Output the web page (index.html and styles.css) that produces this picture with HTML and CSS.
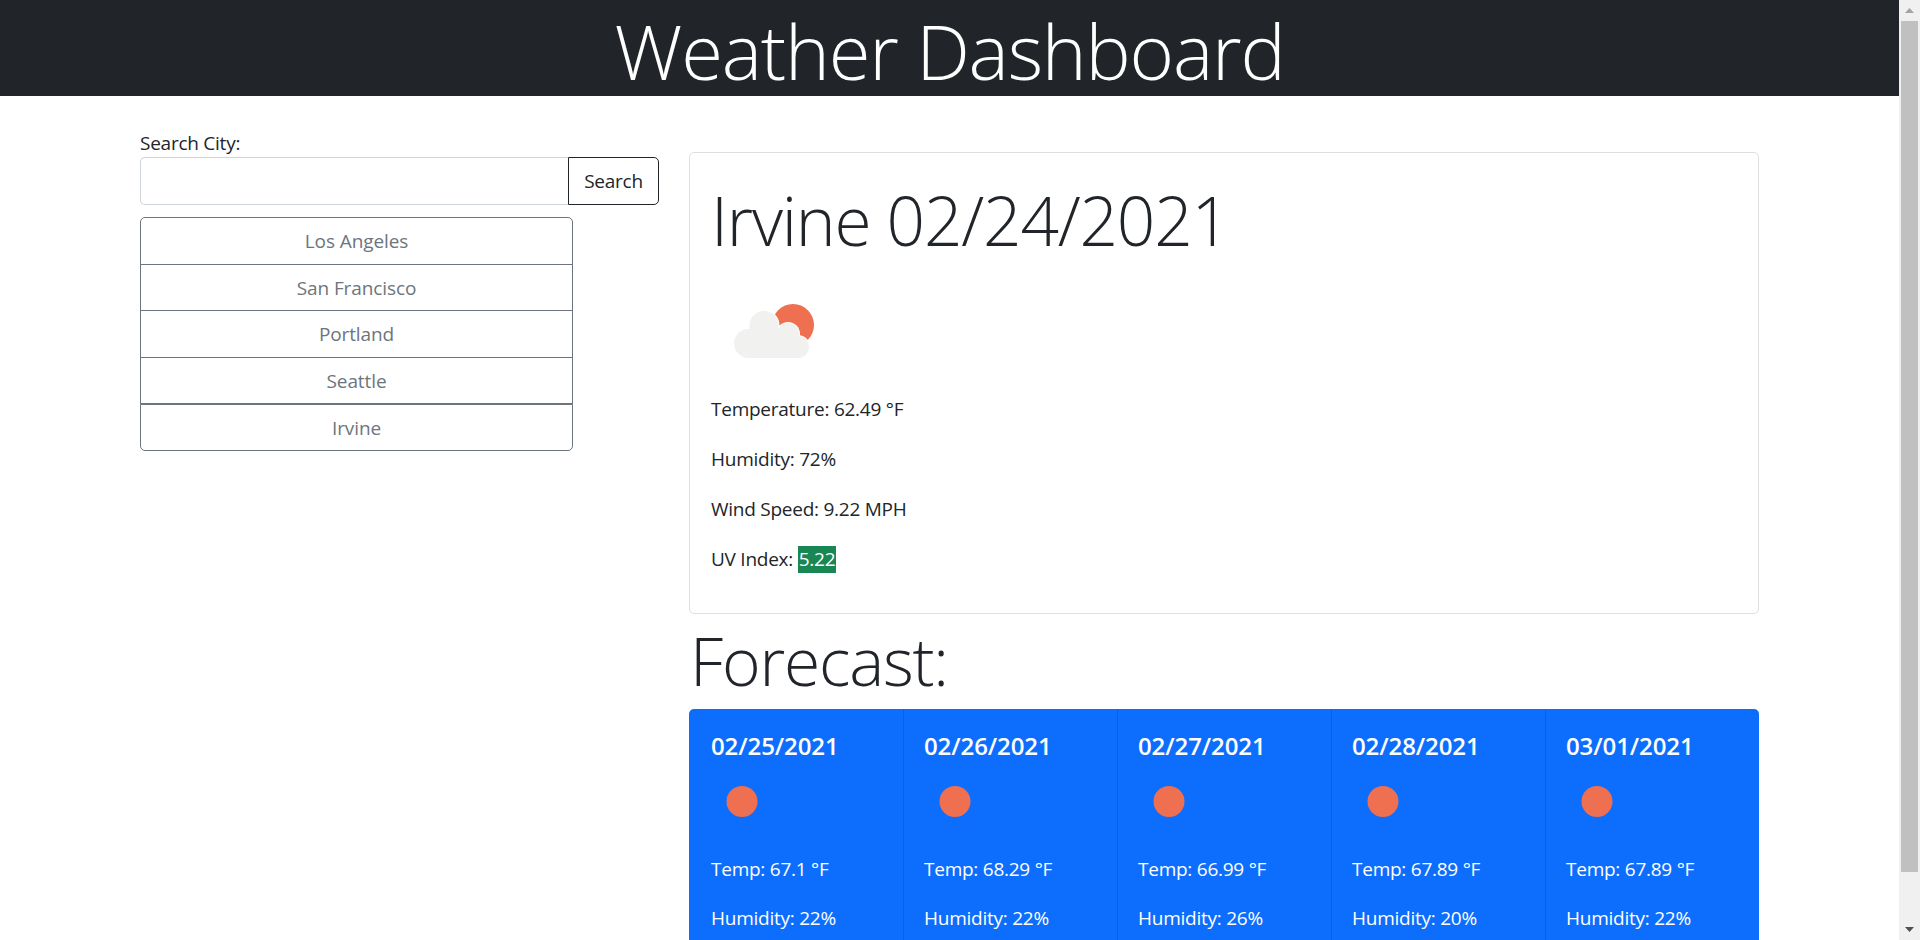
FILE: index.html
```html
<!DOCTYPE html>
<html lang="en">
<head>
    <meta charset="UTF-8">
    <meta name="viewport" content="width=device-width, initial-scale=1.0">
    <title>Weather Dashboard</title>
    <link rel="stylesheet" href="styles.css">
</head>
<body>
    <div class="page">
        <div class="viewport">
            <header class="title-bar">
                <h1>Weather Dashboard</h1>
            </header>
            <main class="layout">
                <section class="search-col">
                    <form class="search-form">
                        <label for="city">Search City:</label>
                        <div class="input-group">
                            <input type="text" id="city">
                            <button type="button" class="search-btn">Search</button>
                        </div>
                    </form>
                    <div class="city-list">
                        <button type="button" class="city">Los Angeles</button>
                        <button type="button" class="city">San Francisco</button>
                        <button type="button" class="city">Portland</button>
                        <button type="button" class="city">Seattle</button>
                        <button type="button" class="city">Irvine</button>
                    </div>
                </section>
                <section class="weather-col">
                    <div class="today-card">
                        <h2>Irvine 02/24/2021</h2>
                        <svg class="icon-large" viewBox="0 0 122 122">
                            <circle class="sun" cx="82" cy="55" r="21"/>
                            <g class="cloud-edge">
                                <circle cx="53" cy="55.5" r="15.5"/>
                                <circle cx="77" cy="64" r="12"/>
                                <circle cx="87" cy="77" r="12"/>
                            </g>
                            <g class="cloud">
                                <circle cx="53" cy="55.5" r="14.5"/>
                                <circle cx="77" cy="64" r="11"/>
                                <circle cx="87" cy="77" r="11"/>
                                <circle cx="37.5" cy="73.5" r="14.5"/>
                                <rect x="37" y="62" width="50" height="26"/>
                            </g>
                        </svg>
                        <p>Temperature: 62.49 °F</p>
                        <p>Humidity: 72%</p>
                        <p>Wind Speed: 9.22 MPH</p>
                        <p>UV Index: <span class="uv">5.22</span></p>
                    </div>
                    <h2 class="forecast-title">Forecast:</h2>
                    <div class="forecast">
                        <div class="day">
                            <h5>02/25/2021</h5>
                            <svg class="icon-small" viewBox="0 0 61 61"><circle class="sun" cx="31" cy="30.5" r="15.5"/></svg>
                            <p>Temp: 67.1 °F</p>
                            <p>Humidity: 22%</p>
                        </div>
                        <div class="day">
                            <h5>02/26/2021</h5>
                            <svg class="icon-small" viewBox="0 0 61 61"><circle class="sun" cx="31" cy="30.5" r="15.5"/></svg>
                            <p>Temp: 68.29 °F</p>
                            <p>Humidity: 22%</p>
                        </div>
                        <div class="day">
                            <h5>02/27/2021</h5>
                            <svg class="icon-small" viewBox="0 0 61 61"><circle class="sun" cx="31" cy="30.5" r="15.5"/></svg>
                            <p>Temp: 66.99 °F</p>
                            <p>Humidity: 26%</p>
                        </div>
                        <div class="day">
                            <h5>02/28/2021</h5>
                            <svg class="icon-small" viewBox="0 0 61 61"><circle class="sun" cx="31" cy="30.5" r="15.5"/></svg>
                            <p>Temp: 67.89 °F</p>
                            <p>Humidity: 20%</p>
                        </div>
                        <div class="day">
                            <h5>03/01/2021</h5>
                            <svg class="icon-small" viewBox="0 0 61 61"><circle class="sun" cx="31" cy="30.5" r="15.5"/></svg>
                            <p>Temp: 67.89 °F</p>
                            <p>Humidity: 22%</p>
                        </div>
                    </div>
                </section>
            </main>
        </div>
        <div class="scrollbar">
            <svg class="arrow" viewBox="0 0 9 5"><polygon class="arrow-up" points="4.5,0 9,5 0,5"/></svg>
            <div class="thumb"></div>
            <svg class="arrow" viewBox="0 0 9 5"><polygon class="arrow-down" points="0,0 9,0 4.5,5"/></svg>
        </div>
    </div>
</body>
</html>
```

FILE: styles.css
```css
* {
    box-sizing: border-box;
}

body {
    margin: 0;
    font-family: "Open Sans", "Noto Sans", sans-serif;
    font-size: 19px;
    letter-spacing: -0.25px;
    line-height: 1.5;
    color: #212529;
    background-color: white;
}

.page {
    display: flex;
    height: 100vh;
    overflow: hidden;
}

.viewport {
    flex: 1;
    overflow: hidden;
}

.title-bar {
    height: 96px;
    padding-top: 7px;
    background-color: #212529;
    color: white;
    text-align: center;
}

.title-bar h1 {
    margin: 0;
    font-size: 76px;
    font-weight: 300;
    line-height: 88px;
    letter-spacing: -1.2px;
}

.layout {
    display: grid;
    grid-template-columns: 519px 1070px;
    gap: 30px;
    padding-left: 140px;
}

/* left column */
.search-col {
    padding-top: 33px;
}

.search-form label {
    display: block;
    line-height: 28px;
}

.input-group {
    display: flex;
    height: 48px;
}

.input-group input {
    flex: 1;
    min-width: 0;
    border: 1px solid #ced4da;
    border-right: none;
    border-radius: 5px 0 0 5px;
}

.search-btn {
    width: 91px;
    padding-top: 1px;
    background: white;
    border: 1px solid #212529;
    border-radius: 0 5px 5px 0;
    color: #212529;
    font: inherit;
    letter-spacing: inherit;
}

.city-list {
    display: flex;
    flex-direction: column;
    width: 433px;
    margin-top: 12px;
}

.city {
    height: 47.5px;
    margin-top: -1px;
    padding-top: 2px;
    background: white;
    border: 1px solid #6c757d;
    color: #6c757d;
    font: inherit;
    letter-spacing: -0.1px;
}

.city:first-child {
    margin-top: 0;
    border-radius: 5px 5px 0 0;
}

.city:last-child {
    margin-top: 0;
    height: 46.5px;
    border-radius: 0 0 5px 5px;
}

/* right column */
.weather-col {
    padding-top: 56px;
}

.today-card {
    height: 462px;
    padding: 21px;
    border: 1px solid #dfdfdf;
    border-radius: 5px;
}

.today-card h2 {
    margin: 5px 0 0;
    font-size: 67.5px;
    font-weight: 300;
    line-height: 82px;
    letter-spacing: -1.2px;
}

.icon-large {
    display: block;
    width: 122px;
    height: 122px;
    margin: 9px 0 3px;
}

.sun {
    fill: #ee7050;
}

.cloud {
    fill: #f1f1f0;
}

.cloud-edge {
    fill: white;
}

.today-card p {
    margin: 0;
    height: 50px;
    line-height: 28px;
}

.uv {
    display: inline-block;
    height: 27px;
    padding: 0 1px;
    background-color: #198754;
    color: white;
    line-height: 27px;
}

.forecast-title {
    margin: 0;
    height: 95px;
    padding-left: 1px;
    font-size: 66px;
    font-weight: 300;
    line-height: 92px;
    letter-spacing: -1.2px;
}

.forecast {
    display: grid;
    grid-template-columns: repeat(5, 1fr);
    background-color: #0d6efd;
    border-radius: 5px 5px 0 0;
    color: white;
}

.day {
    padding: 20px 21px 21px 20px;
    border-left: 1px solid rgba(0, 0, 0, 0.125);
}

.day:first-child {
    padding-left: 22px;
    border-left: none;
}

.day h5 {
    margin: 0;
    font-size: 24px;
    font-weight: 600;
    line-height: 34px;
    letter-spacing: -0.1px;
}

.icon-small {
    display: block;
    width: 61px;
    height: 61px;
    margin-top: 8px;
}

.day p {
    margin: 18px 0 0;
    height: 31px;
    line-height: 28px;
}

.icon-small + p {
    margin-top: 23px;
}

/* scrollbar */
.scrollbar {
    display: flex;
    flex-direction: column;
    align-items: center;
    width: 21px;
    background-color: #f0f0f0;
}

.arrow {
    flex: none;
    width: 9px;
    height: 5px;
    margin: 8px 0;
}

.arrow-up {
    fill: #a3a3a3;
}

.arrow-down {
    fill: #505050;
}

.thumb {
    width: 17px;
    height: 851px;
    margin-bottom: auto;
    background-color: #c0c0c0;
}
```
